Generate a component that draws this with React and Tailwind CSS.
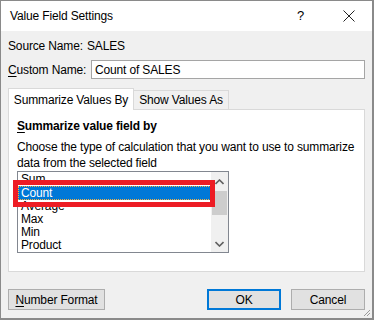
import React from "react";

const font = { fontFamily: '"Liberation Sans", Arial, sans-serif' };

function Chevron({ up }) {
  return (
    <svg width="9" height="6" viewBox="0 0 9 6" className="block">
      <path
        d={up ? "M0.5 5 L4.5 1 L8.5 5" : "M0.5 1 L4.5 5 L8.5 1"}
        stroke="#606060"
        strokeWidth="1.6"
        fill="none"
      />
    </svg>
  );
}

export default function App() {
  const items = ["Sum", "Count", "Average", "Max", "Min", "Product"];
  return (
    <div
      className="w-[374px] h-[320px] bg-[#f0f0f0] border-t border-l border-r-2 border-b-2 border-[#8a8a8a] flex flex-col text-[12px] tracking-[-0.15px] text-black relative overflow-hidden whitespace-nowrap"
      style={font}
    >
      {/* Title bar */}
      <div className="h-[30px] bg-white flex items-center pl-[9px] shrink-0">
        <span className="flex-1 text-[12px]">Value Field Settings</span>
        <span className="w-[12px] text-[13px] mr-[34px]">?</span>
        <svg width="12" height="12" viewBox="0 0 12 12" className="mr-[17px]">
          <path d="M0.5 0.5 L11.5 11.5 M11.5 0.5 L0.5 11.5" stroke="#222" strokeWidth="1" />
        </svg>
      </div>

      <div className="flex flex-col px-[7px]">
        {/* Source name */}
        <div className="mt-[7px] h-[16px] flex items-center leading-[16px]">
          <span className="w-[79px] shrink-0">Source Name:</span>
          <span>SALES</span>
        </div>

        {/* Custom name */}
        <div className="mt-[6px] h-[19px] flex items-center">
          <span className="w-[83px] shrink-0">
            <span className="underline underline-offset-2">C</span>ustom Name:
          </span>
          <div className="w-[276px] h-[19px] bg-white border border-[#a5a5a5] flex items-center pl-[3px] leading-[16px]">
            Count of SALES
          </div>
        </div>

        {/* Tabs */}
        <div className="mt-[9px] h-[21px] flex items-end">
          <div className="relative z-10 w-[126px] h-[22px] -mb-[1px] bg-white border border-b-0 border-[#d9d9d9] flex items-center justify-center leading-[16px]">
            Summarize Values By
          </div>
          <div className="w-[95px] h-[19px] bg-[#f0f0f0] border border-l-0 border-b-0 border-[#d9d9d9] flex items-center justify-center leading-[16px]">
            Show Values As
          </div>
        </div>

        {/* Panel */}
        <div className="h-[163px] w-[357px] bg-white border border-[#d9d9d9] pl-[8px] pt-[8px] flex flex-col">
          <div className="h-[16px] leading-[16px] font-bold">
            <span className="underline underline-offset-2">S</span>ummarize value field by
          </div>
          <div className="mt-[5px] leading-[16px]">
            Choose the type of calculation that you want to use to summarize
          </div>
          <div className="leading-[16px]">data from the selected field</div>

          {/* Listbox */}
          <div className="w-[212px] h-[82px] border border-[#828790] bg-white flex overflow-hidden shrink-0">
            <div className="flex-1 flex flex-col pt-[1px] overflow-hidden">
              {items.map((it) => (
                <div
                  key={it}
                  className={
                    it === "Count"
                      ? "h-[14px] shrink-0 leading-[12px] pl-[2px] bg-[#0078d7] text-white border border-dotted border-[#f5b041]"
                      : "h-[13px] shrink-0 leading-[13px] pl-[3px]"
                  }
                >
                  {it}
                </div>
              ))}
            </div>
            <div className="w-[17px] bg-[#f0f0f0] flex flex-col items-center shrink-0">
              <div className="h-[19px] flex items-center justify-center">
                <Chevron up />
              </div>
              <div className="w-[15px] h-[24px] bg-[#cdcdcd]" />
              <div className="flex-1" />
              <div className="h-[17px] flex items-center justify-center">
                <Chevron />
              </div>
            </div>
          </div>
        </div>

        {/* Buttons */}
        <div className="mt-[17px] h-[21px] flex items-stretch">
          <div className="w-[97px] bg-[#e1e1e1] border border-[#adadad] flex items-center justify-center leading-[16px]">
            <span>
              <span className="underline underline-offset-2">N</span>umber Format
            </span>
          </div>
          <div className="flex-1" />
          <div className="w-[74px] bg-[#e1e1e1] border-2 border-[#0078d7] flex items-center justify-center leading-[16px]">
            OK
          </div>
          <div className="w-[74px] ml-[10px] bg-[#e1e1e1] border border-[#adadad] flex items-center justify-center leading-[16px]">
            Cancel
          </div>
        </div>
      </div>

      {/* Red highlight box (annotation overlay) */}
      <div className="absolute left-[12px] top-[179px] w-[202px] h-[27px] border-[5px] border-[#ed1c24]" />

      {/* Resize grip */}
      <svg width="8" height="8" viewBox="0 0 8 8" className="absolute right-[1px] bottom-[1px]">
        <path d="M7 1 L1 7 M7 4 L4 7" stroke="#9a9a9a" strokeWidth="1" />
      </svg>
    </div>
  );
}
